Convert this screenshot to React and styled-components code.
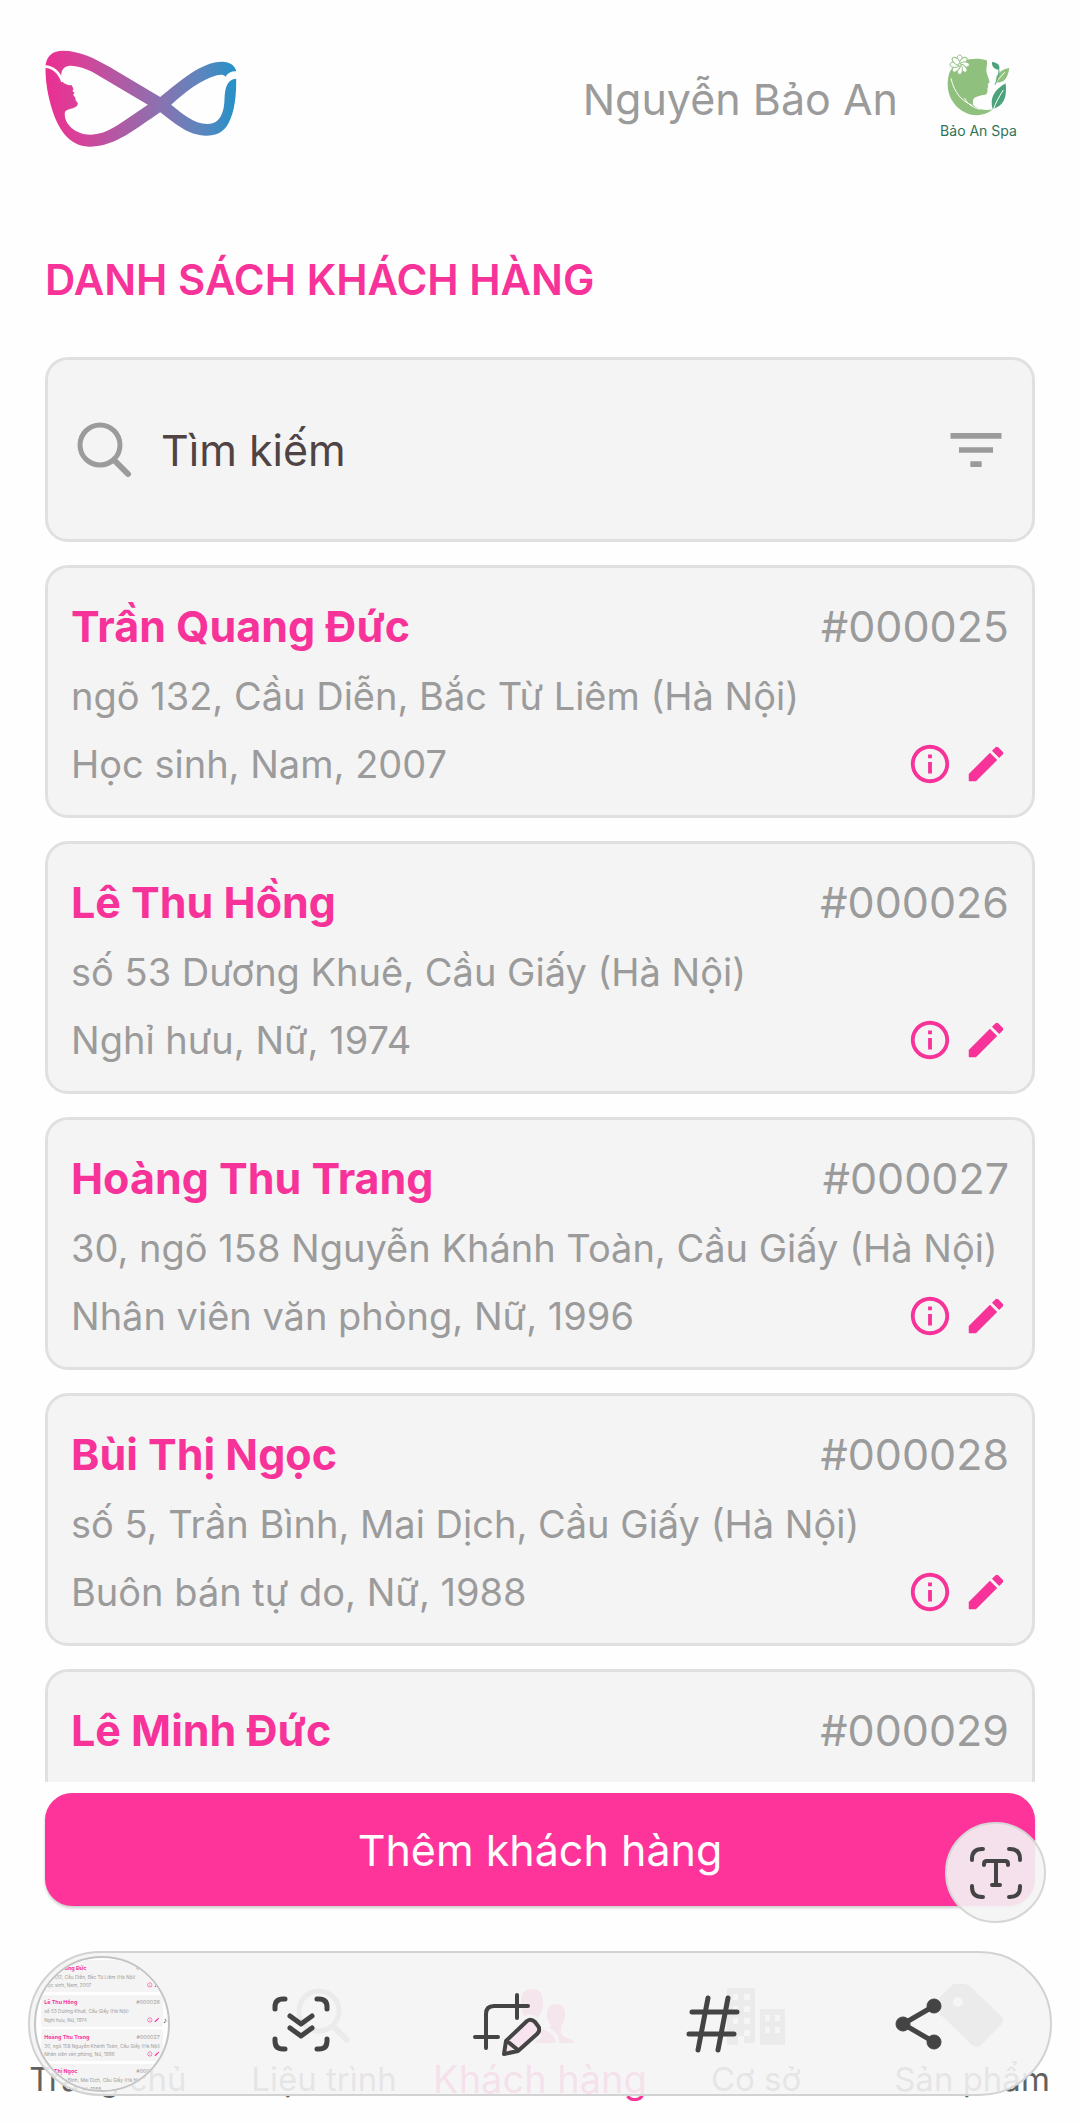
import React from "react";
import styled, { createGlobalStyle } from "styled-components";
import { MdEdit, MdFilterList, MdInfoOutline } from "react-icons/md";

const customers = [
	{ id: "000025", name: "Trần Quang Đức", address: "ngõ 132, Cầu Diễn, Bắc Từ Liêm (Hà Nội)", about: "Học sinh, Nam, 2007" },
	{ id: "000026", name: "Lê Thu Hồng", address: "số 53 Dương Khuê, Cầu Giấy (Hà Nội)", about: "Nghỉ hưu, Nữ, 1974" },
	{ id: "000027", name: "Hoàng Thu Trang", address: "30, ngõ 158 Nguyễn Khánh Toàn, Cầu Giấy (Hà Nội)", about: "Nhân viên văn phòng, Nữ, 1996" },
	{ id: "000028", name: "Bùi Thị Ngọc", address: "số 5, Trần Bình, Mai Dịch, Cầu Giấy (Hà Nội)", about: "Buôn bán tự do, Nữ, 1988" },
	{ id: "000029", name: "Lê Minh Đức", address: "", about: "" },
];

const GlobalStyle = createGlobalStyle`
	* {
		box-sizing: border-box;
	}
	body {
		margin: 0;
		background: #fefefe;
		font-family: Inter, "Noto Sans", sans-serif;
	}
	button,
	input {
		font: inherit;
		color: inherit;
		border: 0;
		padding: 0;
		margin: 0;
		background: none;
	}
	svg {
		display: block;
	}
`;

const Screen = styled.div`
	position: relative;
	display: flex;
	flex-direction: column;
	height: 100vh;
	overflow: hidden;
`;

const Header = styled.header`
	display: flex;
	align-items: center;
	justify-content: space-between;
	padding: 42px 45px;
`;

const Account = styled.div`
	display: flex;
	align-items: center;
	gap: 24px;
	color: #9b9b9b;
	font-size: 43px;
`;

const SpaBadge = styled.div`
	display: flex;
	flex-direction: column;
	align-items: center;
	gap: 3px;
	width: 113px;
	height: 113px;
	padding-top: 12px;
	color: #2f7358;
	font-size: 14px;
	line-height: 24px;
`;

const Main = styled.main`
	display: flex;
	flex-direction: column;
	flex: 1;
	min-height: 0;
	padding: 0 45px;
`;

const Title = styled.h1`
	margin: 53px 0 47px;
	color: #f7339a;
	font-size: 42px;
	font-weight: 600;
	line-height: 60px;
`;

const SearchBox = styled.label`
	display: flex;
	flex-shrink: 0;
	align-items: center;
	gap: 28px;
	height: 185px;
	padding: 0 22px 0 29px;
	border: 3px solid #e0e0e0;
	border-radius: 23px;
	background: #f4f4f4;
	color: #9b9b9b;
`;

const SearchInput = styled.input`
	flex: 1;
	min-width: 0;
	outline: none;
	color: #4f4344;
	font-size: 43px;
	&::placeholder {
		color: #4f4344;
		opacity: 1;
	}
`;

const List = styled.ul`
	display: flex;
	flex-direction: column;
	flex: 1;
	min-height: 0;
	gap: 23px;
	margin: 23px 0 11px;
	padding: 0;
	overflow: hidden;
	list-style: none;
`;

const Card = styled.li`
	flex-shrink: 0;
	min-height: 253px;
	padding: 22px 23px 17px;
	border: 3px solid #e0e0e0;
	border-radius: 23px;
	background: #f4f4f4;
	color: #9b9b9b;
	font-size: 38px;
	line-height: 68px;
	white-space: nowrap;
`;

const CardLine = styled.div`
	display: flex;
	align-items: center;
	justify-content: space-between;
`;

const CardHead = styled(CardLine)`
	font-size: 43px;
	line-height: 72px;
`;

const CustomerName = styled.strong`
	color: #f7339a;
	font-weight: 700;
`;

const Actions = styled.div`
	display: flex;
	gap: 10px;
	color: #f7339a;
`;

const AddButton = styled.button`
	flex-shrink: 0;
	height: 113px;
	border-radius: 27px;
	background: #ff349b;
	box-shadow: 0 2px 3px rgba(0, 0, 0, 0.2);
	color: #fff;
	font-size: 43px;
`;

const TabBar = styled.nav`
	display: grid;
	grid-template-columns: repeat(5, 1fr);
	padding: 78px 0 20px;
`;

const Tab = styled.a`
	display: flex;
	flex-direction: column;
	align-items: center;
	gap: 6px;
	color: ${(props) => (props.$active ? "#f7339a" : "#616161")};
	font-size: ${(props) => (props.$active ? "38px" : "33px")};
	line-height: 50px;
	text-decoration: none;
	white-space: nowrap;
	svg {
		height: 64px;
		color: ${(props) => (props.$active ? "#ff5fae" : "#9b9b9b")};
	}
`;

const CaptureBar = styled.div`
	position: absolute;
	left: 28px;
	right: 28px;
	bottom: 28px;
	display: flex;
	align-items: center;
	height: 145px;
	padding: 0 28px 0 4px;
	border: 2px solid #d2d2d2;
	border-radius: 73px;
	background: rgba(244, 244, 244, 0.9);
	color: #444;
`;

const CaptureTools = styled.div`
	display: grid;
	grid-template-columns: repeat(4, 1fr);
	align-items: center;
	flex: 1;
	margin-left: 28px;
	button {
		display: flex;
		justify-content: center;
	}
`;

const Thumbnail = styled.div`
	position: relative;
	width: 136px;
	height: 136px;
	border: 2px solid #c4c4c4;
	border-radius: 50%;
	background: #fefefe;
	overflow: hidden;
`;

const ThumbnailPage = styled.div`
	zoom: 0.125;
	padding: 0 40px;
	${Card} {
		padding: 25px 26px 20px;
		border: 0;
	}
`;

const ThumbnailNote = styled.span`
	position: absolute;
	right: 1px;
	top: 58px;
	color: #333;
	font-size: 8px;
	line-height: 8px;
`;

const TextCapture = styled.button`
	position: absolute;
	right: 34px;
	bottom: 201px;
	display: flex;
	align-items: center;
	justify-content: center;
	width: 101px;
	height: 101px;
	border: 2px solid #d6d6d6;
	border-radius: 50%;
	background: rgba(244, 244, 244, 0.9);
	color: #444;
`;

const BrandLogo = () => (
	<svg width="192" height="97" viewBox="75 58 575 291" role="img" aria-label="Logo">
		<defs>
			<linearGradient id="brand" x1="0" x2="1" y1="0" y2="0">
				<stop offset="0" stopColor="#ea2f92" />
				<stop offset="0.15" stopColor="#db3f97" />
				<stop offset="0.6" stopColor="#8a72b0" />
				<stop offset="0.8" stopColor="#6084bd" />
				<stop offset="1" stopColor="#2492c8" />
			</linearGradient>
		</defs>
		<path
			fill="url(#brand)"
			fillRule="evenodd"
			d="M76 104C80 75 98 60 128 60C178 60 226 84 270 110L420 199C480 150 545 93 606 93C630 93 646 106 648 122C634 121 623 127 616 138C610 131 601 132 590 134C543 146 492 187 453 222C482 245 520 280 562 280C601 280 612 244 613 205C614 170 622 145 648 144C649 195 643 243 625 278C611 306 586 315 558 315C503 315 462 276 420 245C351 291 286 348 211 348C151 348 117 300 98 243C82 194 75 149 76 104ZM124 143C120 119 131 104 153 105C176 106 197 114 217 124L383 222L310 272C277 295 246 312 211 312C166 312 130 279 134 246C138 231 172 238 173 218L166 208L166 202L159 192L163 186L157 181L160 176L155 164C139 164 132 158 124 151Z"
		/>
		<path fill="none" stroke="#fefefe" strokeWidth="8" d="M74 108C101 109 117 126 127 153" />
	</svg>
);

const SpaLogo = () => (
	<svg width="64" height="62" viewBox="1162 72 192 186" aria-hidden="true">
		<path
			fill="#8fc07e"
			d="M1210 92C1235 85 1262 84 1281 91C1285 103 1278 113 1281 128L1290 156L1284 163L1286 171L1283 175C1286 190 1279 197 1268 195L1249 201C1239 204 1238 218 1241 226C1254 239 1279 243 1299 238C1272 262 1235 260 1208 243C1168 218 1155 171 1170 126C1180 108 1193 98 1210 92Z"
		/>
		<path fill="none" stroke="#fff" strokeWidth="3" d="M1174 145C1184 190 1208 214 1238 226" />
		<path fill="none" stroke="#fff" strokeWidth="3" d="M1215 204C1222 220 1236 232 1262 238" />
		<g fill="#fff" stroke="#8fc07e" strokeWidth="3">
			{[0, 45, 90, 135, 180, 225, 270, 315].map((angle) => (
				<ellipse key={angle} cx="1200" cy="89" rx="8" ry="14" transform={`rotate(${angle} 1200 104)`} />
			))}
			<circle cx="1200" cy="104" r="4" />
		</g>
		<path fill="#4ba37c" d="M1297 96C1316 98 1322 107 1318 120C1303 117 1296 110 1297 96Z" />
		<path fill="#8fc07e" d="M1349 114C1322 119 1306 134 1309 157C1332 160 1344 146 1349 114Z" />
		<path fill="#4ba37c" d="M1338 160C1304 179 1289 204 1299 238C1334 226 1342 203 1338 160Z" />
		<path fill="none" stroke="#fff" strokeWidth="3" d="M1335 127L1308 157M1331 180C1318 200 1307 220 1302 237" />
		<path fill="none" stroke="#4ba37c" strokeWidth="3" d="M1318 120C1318 138 1313 149 1306 164" />
	</svg>
);

const SearchIcon = () => (
	<svg width="56" height="56" viewBox="0 0 56 56" fill="none" stroke="currentColor" aria-hidden="true">
		<circle cx="23" cy="23" r="20" strokeWidth="5" />
		<path d="M37 38L51 52" strokeWidth="6" strokeLinecap="round" />
	</svg>
);

const HomeIcon = () => (
	<svg width="64" height="64" viewBox="0 0 24 24" fill="currentColor" aria-hidden="true">
		<path d="M10 20v-6h4v6h5v-8h3L12 3 2 12h3v8z" />
	</svg>
);

const PeopleIcon = () => (
	<svg width="70" height="64" viewBox="0 0 70 64" fill="currentColor" aria-hidden="true">
		<path d="M27 5C35 5 39 11 38 20C38 27 35 30 33 34V41C36 47 50 46 51 59H2C3 46 17 47 21 41V34C18 30 16 27 16 20C15 11 19 5 27 5Z" />
		<path d="M51 20C59 20 61 26 60 33C59 38 57 40 56 43V49C58 55 68 53 69 59H54C54 50 49 47 44 44L46 41C43 37 42 35 42 30C42 24 45 20 51 20Z" />
	</svg>
);

const BuildingIcon = () => (
	<svg width="58" height="64" viewBox="0 0 58 64" fill="currentColor" aria-hidden="true">
		<path
			fillRule="evenodd"
			d="M0 4H28V59H17V52H11V61H0ZM6 10V16H11V10ZM17 10V16H23V10ZM6 22V28H11V22ZM17 22V28H23V22ZM6 34V40H11V34ZM17 34V40H23V34ZM17 46V52H23V46ZM33 25H58V61H33ZM38 31V37H43V31ZM48 31V37H53V31ZM38 43V49H43V43ZM48 43V49H53V43Z"
		/>
	</svg>
);

const TagIcon = () => (
	<svg width="66" height="64" viewBox="0 0 66 64" fill="currentColor" aria-hidden="true">
		<path fillRule="evenodd" d="M14 0H25Q29 0 33 4L62 32Q66 36 62 41L42 61Q38 65 33 61L4 33Q0 29 0 25V14ZM19 13A5 5 0 1 0 19 23A5 5 0 1 0 19 13Z" />
	</svg>
);

const ScrollCaptureIcon = () => (
	<svg width="58" height="56" viewBox="0 0 58 56" fill="none" stroke="currentColor" strokeWidth="5" strokeLinecap="round" strokeLinejoin="round" aria-hidden="true">
		<path d="M3 13V11Q3 3 11 3H13M45 3H47Q55 3 55 11V13M3 43V45Q3 53 11 53H13M45 53H47Q55 53 55 45V43M18 20L29 28L40 20M18 32L29 40L40 32" />
	</svg>
);

const CropEditIcon = () => (
	<svg width="68" height="64" viewBox="0 0 68 64" fill="none" stroke="currentColor" strokeWidth="4" strokeLinecap="round" strokeLinejoin="round" aria-hidden="true">
		<path d="M2 45H25M13 56V22Q13 14 21 14H55M44 3V26" />
		<path stroke="#f4f4f4" strokeWidth="10" d="M31 62L33 49L54 29Q58 26 62 30L65 34Q68 38 64 42L45 59Z" />
		<path fill="#f7e4ee" d="M31 62L33 49L54 29Q58 26 62 30L65 34Q68 38 64 42L45 59ZM34 49L45 58" />
	</svg>
);

const HashIcon = () => (
	<svg width="54" height="60" viewBox="0 0 54 60" fill="none" stroke="currentColor" strokeWidth="5" strokeLinecap="round" aria-hidden="true">
		<path d="M22 4L12 56M42 4L32 56M6 18H51M3 40H48" />
	</svg>
);

const ShareIcon = () => (
	<svg width="48" height="54" viewBox="0 0 48 54" fill="currentColor" stroke="currentColor" aria-hidden="true">
		<path d="M39 9L8 27L39 45" fill="none" strokeWidth="5" />
		<circle cx="39" cy="9" r="7" />
		<circle cx="8" cy="27" r="7" />
		<circle cx="39" cy="45" r="7" />
	</svg>
);

const TextCaptureIcon = () => (
	<svg width="52" height="52" viewBox="0 0 52 52" fill="none" stroke="currentColor" strokeWidth="4" strokeLinecap="round" strokeLinejoin="round" aria-hidden="true">
		<path d="M2 13V12Q2 2 12 2H13M39 2H40Q50 2 50 12V13M2 39V40Q2 50 12 50H13M39 50H40Q50 50 50 40V39" />
		<path d="M14 18V17Q14 14 17 14H35Q38 14 38 17V18M26 14V38M22 38H30" />
	</svg>
);

const tabs = [
	{ label: "Trang chủ", icon: <HomeIcon /> },
	{ label: "Liệu trình", icon: <SearchIcon /> },
	{ label: "Khách hàng", icon: <PeopleIcon />, active: true },
	{ label: "Cơ sở", icon: <BuildingIcon /> },
	{ label: "Sản phẩm", icon: <TagIcon /> },
];

const CustomerCard = ({ customer }) => (
	<Card>
		<CardHead>
			<CustomerName>{customer.name}</CustomerName>
			<span>#{customer.id}</span>
		</CardHead>
		{customer.address && (
			<>
				<CardLine>{customer.address}</CardLine>
				<CardLine>
					{customer.about}
					<Actions>
						<button type="button" aria-label={`Chi tiết ${customer.name}`}>
							<MdInfoOutline size={46} />
						</button>
						<button type="button" aria-label={`Sửa ${customer.name}`}>
							<MdEdit size={46} />
						</button>
					</Actions>
				</CardLine>
			</>
		)}
	</Card>
);

const App = () => {
	return (
		<>
			<GlobalStyle />
			<Screen>
				<Header>
					<BrandLogo />
					<Account>
						Nguyễn Bảo An
						<SpaBadge>
							<SpaLogo />
							Bảo An Spa
						</SpaBadge>
					</Account>
				</Header>
				<Main>
					<Title>DANH SÁCH KHÁCH HÀNG</Title>
					<SearchBox>
						<SearchIcon />
						<SearchInput type="text" placeholder="Tìm kiếm" aria-label="Tìm kiếm" />
						<button type="button" aria-label="Lọc">
							<MdFilterList size={68} />
						</button>
					</SearchBox>
					<List>
						{customers.map((customer) => (
							<CustomerCard key={customer.id} customer={customer} />
						))}
					</List>
					<AddButton type="button">Thêm khách hàng</AddButton>
				</Main>
				<TabBar>
					{tabs.map((tab) => (
						<Tab key={tab.label} href="#" $active={tab.active}>
							{tab.icon}
							{tab.label}
						</Tab>
					))}
				</TabBar>

				<TextCapture type="button" aria-label="Trích xuất văn bản">
					<TextCaptureIcon />
				</TextCapture>
				<CaptureBar>
					<Thumbnail inert>
						<ThumbnailPage>
							<List>
								{customers.slice(0, 4).map((customer) => (
									<CustomerCard key={customer.id} customer={customer} />
								))}
							</List>
						</ThumbnailPage>
						<ThumbnailNote>♪</ThumbnailNote>
					</Thumbnail>
					<CaptureTools>
						<button type="button" aria-label="Chụp cuộn">
							<ScrollCaptureIcon />
						</button>
						<button type="button" aria-label="Cắt và sửa">
							<CropEditIcon />
						</button>
						<button type="button" aria-label="Thêm thẻ">
							<HashIcon />
						</button>
						<button type="button" aria-label="Chia sẻ">
							<ShareIcon />
						</button>
					</CaptureTools>
				</CaptureBar>
			</Screen>
		</>
	);
};

export default App;
